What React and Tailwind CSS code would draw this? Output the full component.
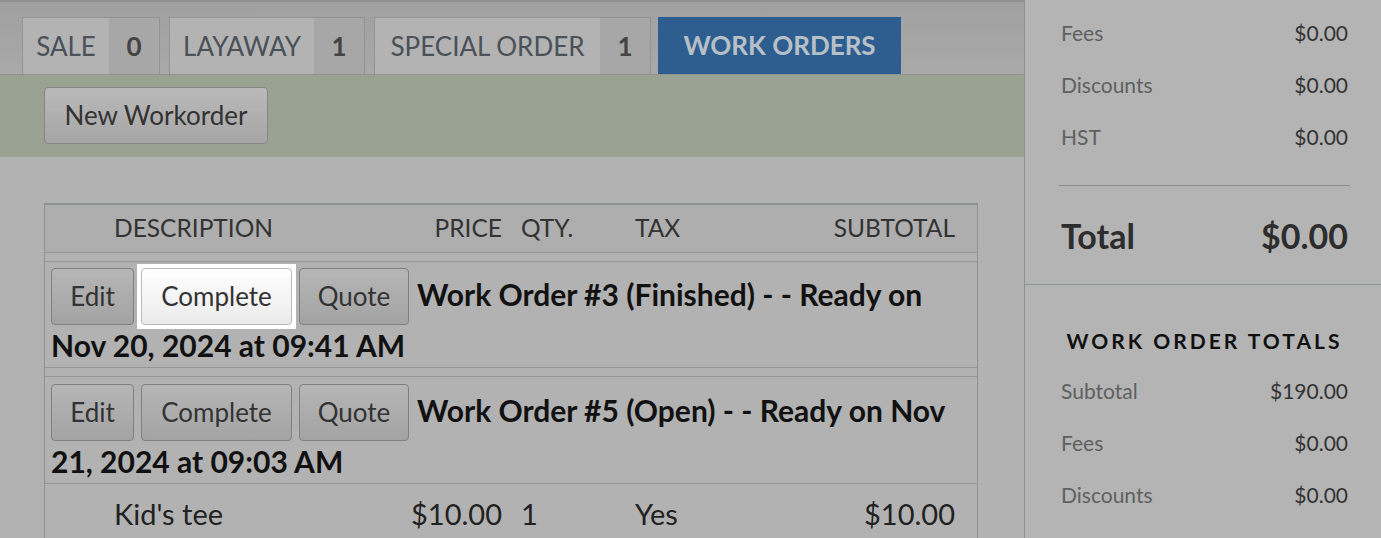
import React from 'react';

const tabs = [
  { label: 'SALE', count: 0, labelW: 'w-[86px]', gap: 'ml-0' },
  { label: 'LAYAWAY', count: 1, labelW: 'w-[144px]', gap: 'ml-[9px]' },
  { label: 'SPECIAL ORDER', count: 1, labelW: 'w-[225px]', gap: 'ml-[9px]' },
];

const topTotals = [
  { label: 'Fees', value: '$0.00' },
  { label: 'Discounts', value: '$0.00' },
  { label: 'HST', value: '$0.00' },
];

const workOrderTotals = [
  { label: 'Subtotal', value: '$190.00' },
  { label: 'Fees', value: '$0.00' },
  { label: 'Discounts', value: '$0.00' },
];

const workOrders = [
  { id: 3, title: 'Work Order #3 (Finished) - - Ready on Nov 20, 2024 at 09:41 AM', highlight: true, pad: 'pt-[6px]' },
  { id: 5, title: 'Work Order #5 (Open) - - Ready on Nov 21, 2024 at 09:03 AM', highlight: false, pad: 'pt-[7px]' },
];

function RowButton({ children, width, light }) {
  const tone = light
    ? 'bg-linear-to-b from-[#fefefe] to-[#ebebeb] border-[#b9b9b9]'
    : 'bg-linear-to-b from-[#b6b6b6] to-[#a3a3a3] border-[#808080]';
  return (
    <button className={`inline-block h-[57px] ${width} rounded-[4px] border ${tone} text-center align-baseline text-[26px] font-normal leading-[55px] text-[#333] font-['Lato',sans-serif]`}>
      {children}
    </button>
  );
}

function TotalRow({ label, value }) {
  return (
    <div className="flex h-[52px] items-center justify-between text-[21px]">
      <span className="text-[#5d6161]">{label}</span>
      <span className="text-[#333]">{value}</span>
    </div>
  );
}

export default function App() {
  return (
    <div className="flex h-[538px] w-[1381px] overflow-hidden bg-[#b3b3b3] font-['Lato',sans-serif]">
      {/* main column */}
      <div className="flex w-[1025px] shrink-0 flex-col border-r border-[#8b8f8f] bg-[#b2b2b2]">
        <div className="h-[2px] shrink-0 bg-[#8e9191]" />
        <div className="flex shrink-0 border-b border-[#8f9593] bg-linear-to-b from-[#a0a0a0] to-[#a9a9a9] pl-[22px] pt-[15px]">
          {tabs.map((t) => (
            <div key={t.label} className={`flex h-[57px] border border-b-0 border-[#909494] ${t.gap}`}>
              <div className={`flex ${t.labelW} items-center justify-center bg-[#b3b3b3] text-[26px] text-[#4a5159]`}>
                {t.label}
              </div>
              <div className="flex w-[50px] items-center justify-center bg-[#a7a7a7] text-[26px] font-bold text-[#444]">
                {t.count}
              </div>
            </div>
          ))}
          <div className="ml-[7px] flex h-[57px] w-[243px] items-center justify-center bg-[#2e5e90] text-[26px] font-bold text-[#b8c0c7]">
            WORK ORDERS
          </div>
        </div>
        <div className="shrink-0 bg-[#9aa392] pb-[13px] pl-[44px] pt-[12px]">
          <button className="h-[57px] w-[224px] rounded-[4px] border border-[#858585] bg-linear-to-b from-[#b9b9b9] to-[#a6a6a6] text-[26px] text-[#333] font-['Lato',sans-serif]">
            New Workorder
          </button>
        </div>

        <div className="ml-[44px] mt-[46px] w-[934px] shrink-0 border border-t-2 border-[#8e9292] text-[#2a2a2a]">
          <div className="flex h-[48px] items-center border-b border-[#929696] bg-[#aeaeae] text-[24.5px] text-[#333]">
            <div className="w-[336px] pl-[69px]">DESCRIPTION</div>
            <div className="w-[121px] text-right">PRICE</div>
            <div className="w-[133px] pl-[19px]">QTY.</div>
            <div className="w-[100px]">TAX</div>
            <div className="w-[220px] text-right">SUBTOTAL</div>
          </div>
          {workOrders.map((w) => (
            <React.Fragment key={w.id}>
              <div className="h-[9px] border-b border-[#929696]" />
              <div className={`border-b border-[#929696] pb-[2px] pl-[6px] pr-[6px] ${w.pad} text-[30px] font-bold leading-[40px] text-[#111]`}>
                <RowButton width="w-[83px]">Edit</RowButton>
                {w.highlight ? (
                  <span className="mx-[3px] -my-[4px] inline-block bg-white p-[4px] align-baseline">
                    <RowButton width="w-[151px]" light>Complete</RowButton>
                  </span>
                ) : (
                  <span className="mx-[7px] inline-block align-baseline">
                    <RowButton width="w-[151px]">Complete</RowButton>
                  </span>
                )}
                <RowButton width="w-[110px]">Quote</RowButton>
                <span className="ml-[8px]">{w.title}</span>
              </div>
            </React.Fragment>
          ))}
          <div className="flex h-[80px] pt-[12px] text-[29px] leading-[36px] text-[#222]">
            <div className="w-[336px] pl-[69px]">Kid's tee</div>
            <div className="w-[121px] text-right">$10.00</div>
            <div className="w-[133px] pl-[19px]">1</div>
            <div className="w-[100px]">Yes</div>
            <div className="w-[220px] text-right">$10.00</div>
          </div>
        </div>
      </div>

      {/* totals sidebar */}
      <div className="flex-1 bg-[#b4b4b4]">
        <div className="pl-[36px] pr-[33px] pt-[7px]">
          {topTotals.map((r) => (
            <TotalRow key={r.label} {...r} />
          ))}
          <div className="-ml-[2px] -mr-[2px] mt-[22px] h-px bg-[#8d9090]" />
          <div className="flex h-[98px] items-center justify-between text-[34px] font-bold text-[#2d2d2d]">
            <span>Total</span>
            <span>$0.00</span>
          </div>
        </div>
        <div className="h-px bg-[#8d9292]" />
        <div className="pl-[36px] pr-[33px] pt-[41px]">
          <div className="flex h-[30px] items-center justify-center text-[21px] font-bold tracking-[3px] text-[#111]">
            WORK ORDER TOTALS
          </div>
          <div className="mt-[9px]">
            {workOrderTotals.map((r) => (
              <TotalRow key={r.label} {...r} />
            ))}
          </div>
        </div>
      </div>
    </div>
  );
}
